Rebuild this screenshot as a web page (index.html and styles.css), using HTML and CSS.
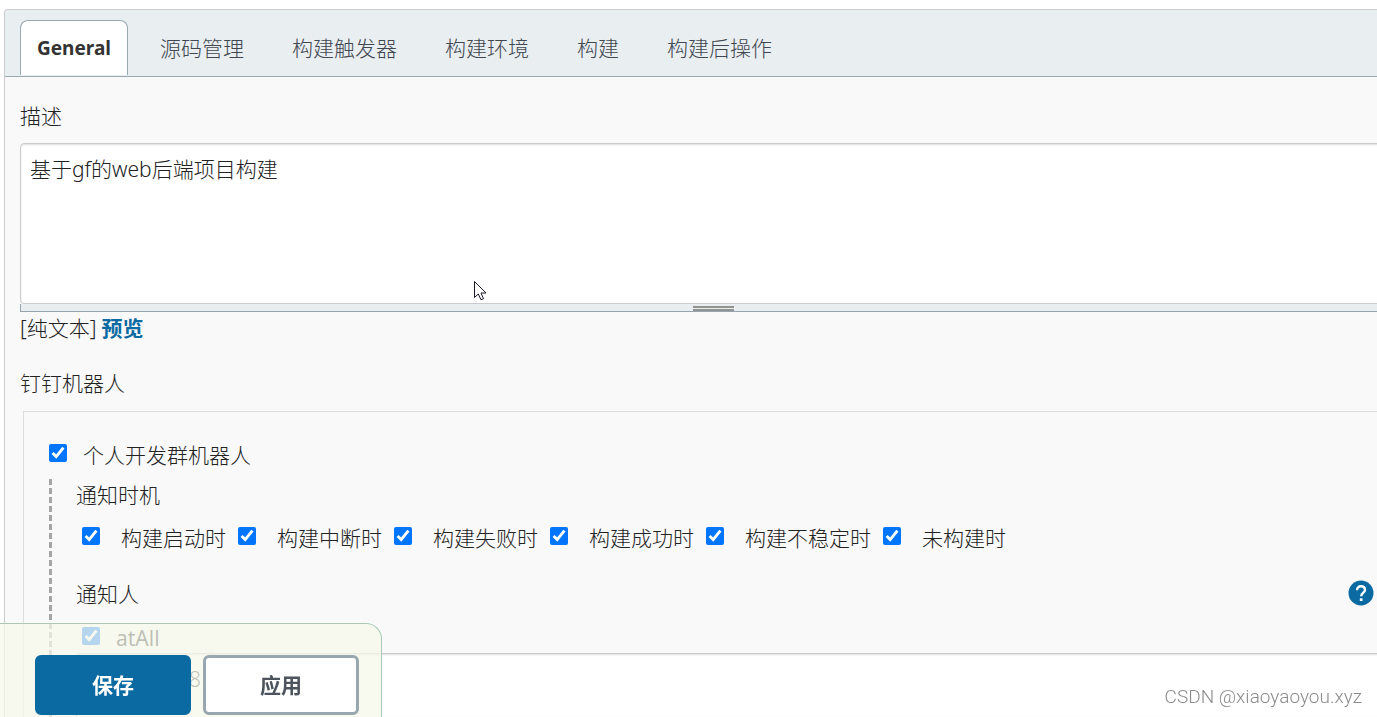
FILE: index.html
```html
<!DOCTYPE html>
<html lang="zh-CN">
<head>
<meta charset="utf-8">
<title>General</title>
<link rel="stylesheet" href="styles.css">
</head>
<body>
<form class="config">
  <nav class="tabs">
    <a class="tab tab-active" href="#general">General</a>
    <a class="tab" href="#scm">源码管理</a>
    <a class="tab" href="#triggers">构建触发器</a>
    <a class="tab" href="#env">构建环境</a>
    <a class="tab" href="#build">构建</a>
    <a class="tab" href="#post">构建后操作</a>
  </nav>
  <main class="content">
    <label class="row" for="desc">描述</label>
    <div class="editor">
      <textarea class="text" id="desc">基于gf的web后端项目构建</textarea>
      <div class="resizer"><span class="grip"></span></div>
    </div>
    <div class="row format"><span>[纯文本]</span><a class="preview" href="#preview">预览</a></div>
    <div class="row">钉钉机器人</div>
    <section class="robots">
      <label class="row robot"><input class="check" type="checkbox" checked><span>个人开发群机器人</span></label>
      <div class="details">
        <div class="row">通知时机</div>
        <div class="row moments">
          <label class="moment"><input class="check" type="checkbox" checked><span>构建启动时</span></label>
          <label class="moment"><input class="check" type="checkbox" checked><span>构建中断时</span></label>
          <label class="moment"><input class="check" type="checkbox" checked><span>构建失败时</span></label>
          <label class="moment"><input class="check" type="checkbox" checked><span>构建成功时</span></label>
          <label class="moment"><input class="check" type="checkbox" checked><span>构建不稳定时</span></label>
          <label class="moment"><input class="check" type="checkbox" checked><span>未构建时</span></label>
        </div>
        <div class="row people">
          <span>通知人</span>
          <button class="help" type="button" aria-label="?">
            <svg viewBox="0 0 26 26" width="26" height="26"><circle cx="13" cy="13" r="12.5" fill="#0b6aa2"/><path d="M9 10.2C9 7.8 10.7 6.200 13 6.200S17 7.700 17 9.900C17 12.600 13.200 12.700 13.200 16.300" fill="none" stroke="#fff" stroke-width="2.400"/><rect x="11.800" y="18.300" width="2.700" height="2.700" fill="#fff"/></svg>
          </button>
        </div>
        <label class="row at-all"><input class="check" type="checkbox" checked><span>atAll</span></label>
        <div class="phones-row"><textarea class="text phones" aria-label="通知人">81</textarea></div>
      </div>
    </section>
  </main>
</form>
<footer class="actions">
  <button class="button primary" type="button">保存</button>
  <button class="button" type="button">应用</button>
</footer>
<svg class="cursor" viewBox="0 0 13 20" width="13" height="20"><path d="M.5.5V16.500L4.300 13L7 18.800L9.500 17.700L7 12H12Z" fill="#fff" stroke="#1c1726"/></svg>
<div class="watermark">CSDN @xiaoyaoyou.xyz</div>
</body>
</html>
```

FILE: styles.css
```css
* { box-sizing: border-box; }
body {
  margin: 0;
  height: 100vh;
  overflow: hidden;
  background: #fff;
  color: #222;
  font: 300 21px/30px "Noto Sans", "Noto Sans CJK SC", sans-serif;
}
.config {
  margin: 9px 0 0 4px;
  border: 1px solid #ccc;
  border-width: 1px 0 0 1px;
  border-radius: 4px 0 0 0;
  background: #f9f9f9;
  overflow: hidden;
}
.tabs {
  display: flex;
  gap: 16px;
  padding: 10px 15px 1px;
  background: #e9eef1;
  border-bottom: 1px solid #98a9b0;
}
.tab {
  padding: 13px 16px 12px;
  color: #404750;
  text-decoration: none;
}
.tab-active {
  border: 1px solid #98a9b0;
  border-bottom: 0;
  border-radius: 8px 8px 0 0;
  padding: 12px 16px;
  background: #fff;
  color: #333;
  font-size: 19px;
  font-weight: 700;
}
.content { padding: 24px 0 0 15px; }
.row { display: flex; align-items: center; }
/* The editor runs past the right edge of the window. */
.editor { margin: 12px -28px 1px 0; }
.text {
  display: block;
  width: 100%;
  height: 161px;
  margin: 0;
  padding: 10px 9px;
  border: 1px solid #ccc;
  border-radius: 4px;
  background: #fff;
  box-shadow: inset 0 1px 2px #ddd;
  color: #222;
  font: inherit;
  resize: none;
  outline: none;
}
.resizer {
  display: flex;
  justify-content: center;
  height: 8px;
  padding-top: 2px;
  background: #e9eef1;
  border: 1px solid #98a5ae;
  border-width: 0 0 1px 1px;
}
.grip {
  width: 41px;
  height: 5px;
  border: 2px solid #92948f;
  border-width: 2px 0;
}
.format { gap: 5px; margin-bottom: 25px; }
.preview { color: #0b6aa2; font-weight: 700; text-decoration: none; }
.robots {
  margin: 13px 0 0 3px;
  padding: 28px 0 0 25px;
  border: 1px solid #ddd;
  border-width: 1px 0 0 1px;
}
.check { flex: none; width: 18px; height: 18px; margin: 0 0 4px; accent-color: #0075ff; }
.robot { gap: 16px; margin-bottom: 9px; }
.details {
  padding: 1px 0 0 27px;
  background: repeating-linear-gradient(#a5a5a5 0 6px, transparent 6px 9px) left top / 3px 100% no-repeat;
}
.moments { gap: 12px; margin: 13px 0 26px; padding-left: 6px; }
.moment { display: flex; align-items: center; gap: 21px; white-space: nowrap; }
.people { justify-content: space-between; margin-bottom: 14px; padding-right: 3px; }
.help { display: flex; margin: 0 0 2px; padding: 0; border: 0; background: none; }
.at-all { gap: 16px; padding-left: 6px; font-weight: 400; }
.phones-row { margin-right: -28px; }
.phones { height: 64px; padding-left: 112px; border-bottom: 0; border-radius: 4px 4px 0 0; }
.actions {
  position: fixed;
  left: 0;
  bottom: 0;
  display: flex;
  gap: 12px;
  padding: 31px 22px 2px 35px;
  border: 1px solid #a9cbb5;
  border-width: 1px 1px 0 0;
  border-radius: 0 16px 0 0;
  background: rgba(245, 248, 235, .74);
}
.button {
  width: 156px;
  height: 60px;
  padding: 0;
  border: 3px solid #98a6b0;
  border-radius: 6px;
  background: #fff;
  color: #4d545d;
  font: inherit;
  font-weight: 700;
}
.primary { border-color: #0b6aa2; background: #0b6aa2; color: #fff; }
.cursor { position: absolute; left: 474px; top: 281px; }
.watermark {
  position: fixed;
  right: 15px;
  bottom: 5px;
  color: #8c8c8c;
  font: 300 19px/30px Roboto, sans-serif;
}
```
